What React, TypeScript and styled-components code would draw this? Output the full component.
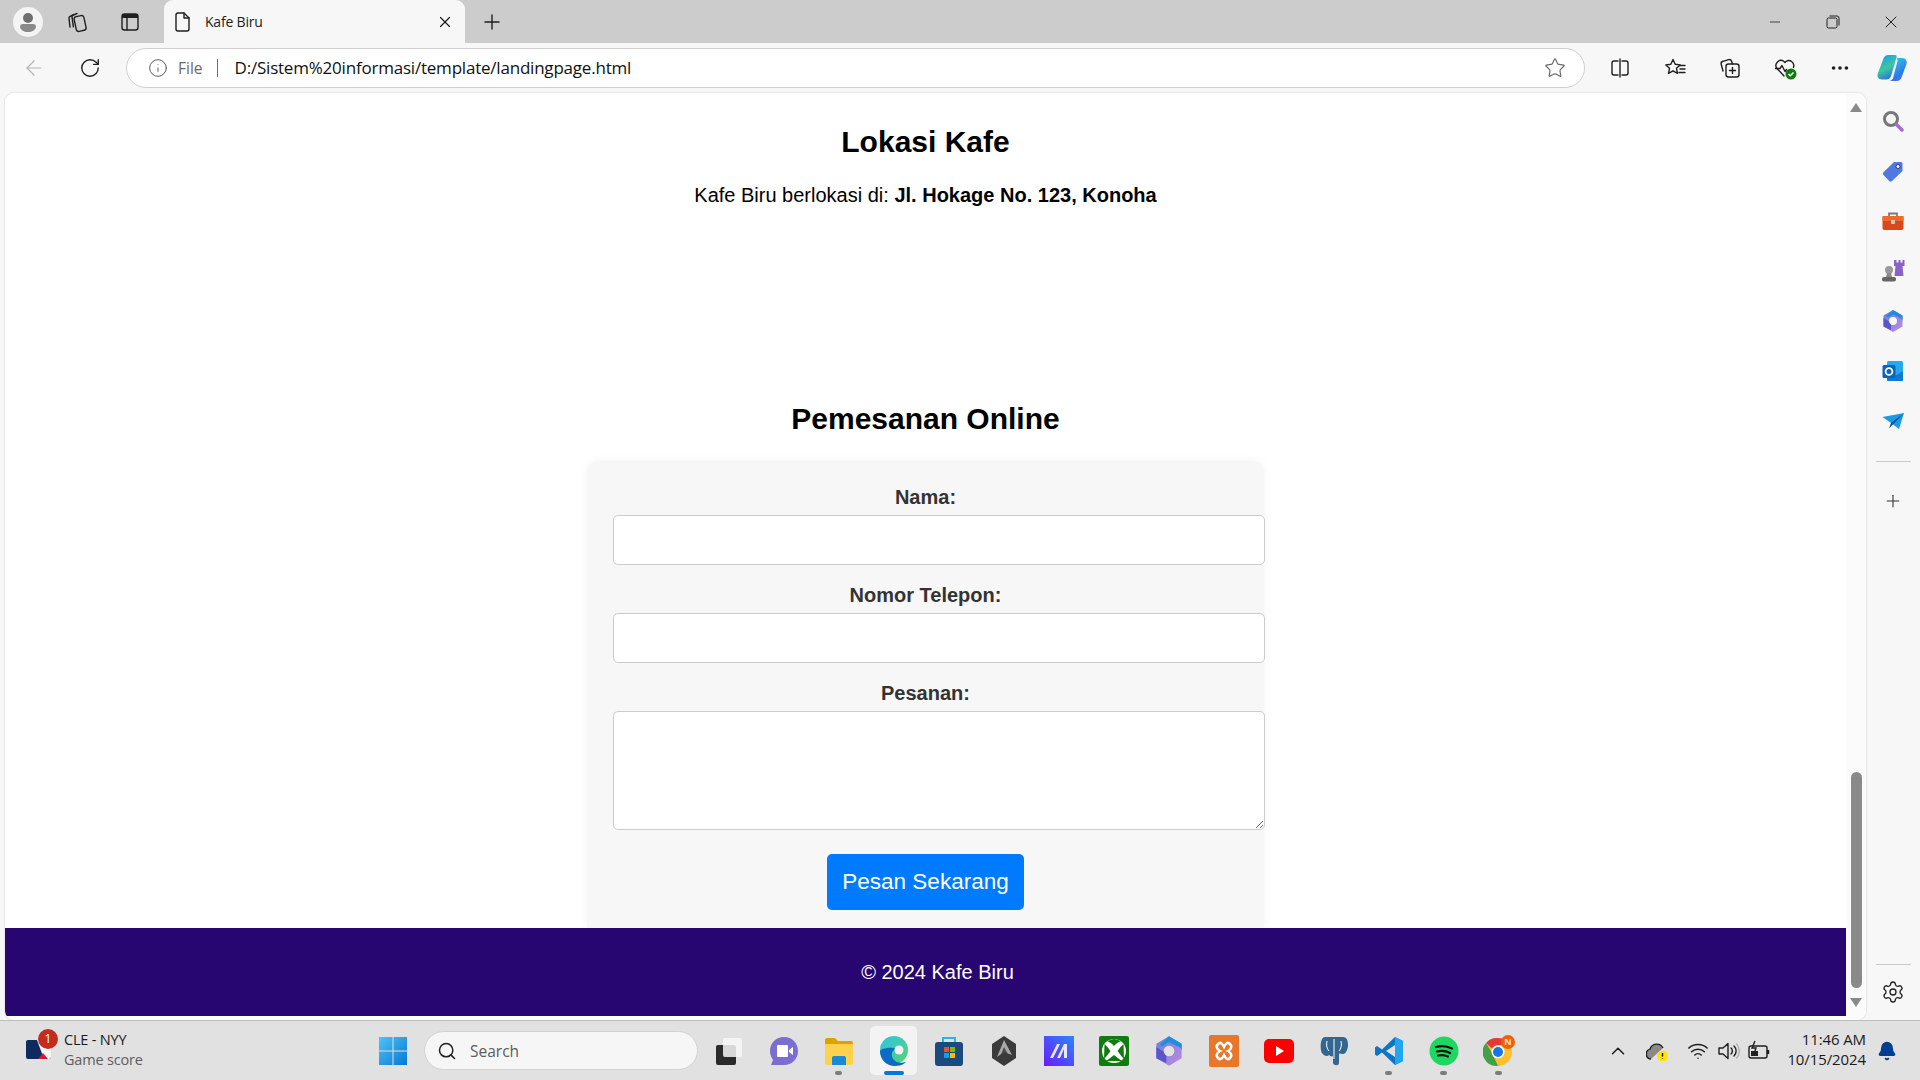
import React from "react"
import styled, { createGlobalStyle } from "styled-components"
import {
  ArrowLeft,
  Bell,
  ChevronUp,
  Info,
  Minus,
  MoreHorizontal,
  Plus,
  RotateCw,
  Search,
  Settings,
  Star,
  Wifi,
  X,
} from "lucide-react"

const GlobalStyle = createGlobalStyle`
  html, body {
    margin: 0;
    padding: 0;
    width: 1920px;
    height: 1080px;
    overflow: hidden;
    font-family: "Liberation Sans", Arial, sans-serif;
  }
  * { box-sizing: border-box; }
`

const Screen = styled.div`
  width: 1920px;
  height: 1080px;
  display: flex;
  flex-direction: column;
  overflow: hidden;
  background: #f7f7f7;
`

/* browser chrome */
const TabStrip = styled.div`
  height: 43px;
  flex: none;
  display: flex;
  align-items: center;
  background: #cccccc;
  color: #1f1f1f;
`
const Avatar = styled.div`
  width: 30px;
  height: 30px;
  margin-left: 13px;
  border-radius: 50%;
  background: #f4f4f4;
  display: flex;
  align-items: center;
  justify-content: center;
`
const StripSlot = styled.div<{ $w: number; $ml?: number }>`
  width: ${(p) => p.$w}px;
  height: 30px;
  margin-left: ${(p) => p.$ml ?? 0}px;
  flex: none;
  display: flex;
  align-items: center;
  justify-content: center;
`
const Tab = styled.div`
  width: 301px;
  height: 43px;
  margin-left: 8px;
  flex: none;
  display: flex;
  align-items: center;
  padding: 0 11px 0 6px;
  background: #f7f7f7;
  border-radius: 9px 9px 0 0;
  font-family: "Open Sans", sans-serif;
  font-size: 14px;
  color: #1c1c1c;
`
const TabTitle = styled.span`
  margin-left: 11px;
  flex: 1;
  letter-spacing: -0.2px;
`
const WindowControls = styled.div`
  margin-left: auto;
  display: flex;
  align-items: center;
`
const Toolbar = styled.div`
  height: 50px;
  flex: none;
  display: flex;
  align-items: center;
  background: #f7f7f7;
`
const ToolSlot = styled.div<{ $w: number; $ml?: number }>`
  width: ${(p) => p.$w}px;
  height: 36px;
  margin-left: ${(p) => p.$ml ?? 0}px;
  flex: none;
  display: flex;
  align-items: center;
  justify-content: center;
`
const AddressBar = styled.div`
  width: 1459px;
  height: 40px;
  margin-left: 8px;
  flex: none;
  display: flex;
  align-items: center;
  padding: 0 18px 0 21px;
  background: #ffffff;
  border: 1px solid #cfcfcf;
  border-radius: 20px;
`
const FileChip = styled.span`
  margin-left: 10px;
  padding-right: 14px;
  border-right: 1px solid #6f6f6f;
  line-height: 18px;
  font-family: "Open Sans", sans-serif;
  font-size: 15.5px;
  color: #6a6a6a;
`
const UrlText = styled.span`
  margin: 0 0 2px 17px;
  flex: 1;
  font-family: "Open Sans", sans-serif;
  font-size: 17px;
  letter-spacing: -0.21px;
  color: #111111;
`

/* page */
const Body = styled.div`
  flex: 1;
  display: flex;
  min-height: 0;
`
const Viewport = styled.div`
  width: 1861px;
  margin-left: 5px;
  flex: none;
  display: flex;
  background: #ffffff;
  border-radius: 9px;
  box-shadow: 0 0 2px rgba(0, 0, 0, 0.22);
  overflow: hidden;
`
const Page = styled.div`
  width: 1841px;
  flex: none;
  display: flex;
  flex-direction: column;
  padding-top: 28px;
  background: #ffffff;
`
const Heading = styled.h2`
  margin: 0;
  font-size: 30px;
  line-height: 42px;
  font-weight: 700;
  text-align: center;
  color: #000000;
`
const Address = styled.p`
  margin: 20px 0 191px;
  font-size: 20px;
  line-height: 24px;
  text-align: center;
  color: #000000;
`
const OrderForm = styled.form`
  width: 677px;
  height: 467px;
  flex: none;
  margin: 21px auto 0;
  padding: 24px 0 0 26px;
  background: #f7f7f7;
  border-radius: 12px 12px 0 0;
  box-shadow: 0 0 10px rgba(0, 0, 0, 0.05);
`
const FieldLabel = styled.label`
  display: block;
  width: 625px;
  margin-bottom: 6px;
  font-size: 20px;
  line-height: 24px;
  font-weight: 700;
  text-align: center;
  color: #333333;
`
const TextField = styled.input`
  display: block;
  width: 652px;
  height: 50px;
  margin-bottom: 18px;
  background: #ffffff;
  border: 1px solid #cccccc;
  border-radius: 5px;
`
const MessageField = styled.textarea`
  display: block;
  width: 652px;
  height: 119px;
  margin-bottom: 24px;
  background: #ffffff;
  border: 1px solid #cccccc;
  border-radius: 5px;
`
const SubmitRow = styled.div`
  width: 625px;
  display: flex;
  justify-content: center;
`
const SubmitButton = styled.button`
  width: 197px;
  height: 56px;
  padding: 0;
  border: none;
  border-radius: 5px;
  background: #007bff;
  color: #ffffff;
  font-family: "Liberation Sans", Arial, sans-serif;
  font-size: 22.5px;
`
const Footer = styled.footer`
  height: 88px;
  flex: none;
  display: flex;
  align-items: center;
  justify-content: center;
  padding-left: 24px;
  background: #280671;
  color: #ffffff;
  font-size: 20px;
`
const ScrollTrack = styled.div`
  width: 20px;
  flex: none;
  display: flex;
  flex-direction: column;
  align-items: center;
  padding: 10px 0 13px;
  background: #fbfbfb;
`
const ScrollArrow = styled.div<{ $down?: boolean }>`
  width: 0;
  height: 0;
  border-left: 6px solid transparent;
  border-right: 6px solid transparent;
  ${(p) =>
    p.$down
      ? "border-top: 9px solid #8a8a8a; margin-top: 10px;"
      : "border-bottom: 9px solid #8a8a8a;"}
`
const ScrollThumb = styled.div`
  width: 11px;
  height: 216px;
  margin-top: auto;
  border-radius: 6px;
  background: #8a8a8a;
`

/* edge sidebar */
const Sidebar = styled.aside`
  width: 54px;
  flex: none;
  display: flex;
  flex-direction: column;
  align-items: center;
  padding: 3px 0;
`
const SideSlot = styled.div`
  width: 50px;
  height: 50px;
  flex: none;
  display: flex;
  align-items: center;
  justify-content: center;
  color: #333333;
`
const SideRule = styled.div<{ $auto?: boolean }>`
  width: 35px;
  height: 1px;
  flex: none;
  margin: ${(p) => (p.$auto ? "auto 0 2px" : "15px 0 14px")};
  background: #c9c9c9;
`

/* windows taskbar */
const Taskbar = styled.div`
  height: 60px;
  flex: none;
  display: flex;
  align-items: center;
  position: relative;
  background: #e1e1e1;
  border-top: 1px solid #bdbdbd;
  font-family: "Open Sans", sans-serif;
  color: #1b1b1b;
`
const Widget = styled.div`
  width: 378px;
  flex: none;
  display: flex;
  align-items: center;
  padding-left: 26px;
`
const WidgetIcon = styled.div`
  position: relative;
  width: 26px;
  height: 26px;
`
const Badge = styled.span`
  position: absolute;
  top: -9px;
  left: 12px;
  width: 20px;
  height: 20px;
  border-radius: 50%;
  background: #c42b1c;
  color: #ffffff;
  font-size: 12px;
  line-height: 20px;
  text-align: center;
`
const WidgetText = styled.div`
  margin-left: 12px;
  margin-top: -2px;
  font-size: 14.5px;
  line-height: 20px;
  letter-spacing: -0.2px;
`
const WidgetSub = styled.div`
  color: #5e5e5e;
`
const SearchPill = styled.div`
  width: 274px;
  height: 39px;
  flex: none;
  margin: 0 3px 0 16px;
  display: flex;
  align-items: center;
  padding-left: 12px;
  gap: 13px;
  background: #f6f6f6;
  border: 1px solid #d2d2d2;
  border-radius: 20px;
  color: #5c5c5c;
  font-size: 15.5px;
`
const TaskSlot = styled.div<{ $active?: boolean }>`
  width: 47px;
  height: 49px;
  margin: 0 4px;
  flex: none;
  position: relative;
  display: flex;
  align-items: center;
  justify-content: center;
  border-radius: 5px;
  background: ${(p) => (p.$active ? "#f3f3f3" : "transparent")};
`
const RunDot = styled.span<{ $active?: boolean }>`
  position: absolute;
  bottom: 0;
  left: 50%;
  width: ${(p) => (p.$active ? 20 : 7)}px;
  height: 4px;
  margin-left: ${(p) => (p.$active ? -10 : -3.5)}px;
  border-radius: 2px;
  background: ${(p) => (p.$active ? "#0078d4" : "#7c7c7c")};
`
const Tray = styled.div`
  margin-left: auto;
  padding-right: 13px;
  display: flex;
  align-items: center;
`
const TraySlot = styled.div<{ $w: number }>`
  width: ${(p) => p.$w}px;
  flex: none;
  display: flex;
  align-items: center;
  justify-content: center;
`
const Clock = styled.div`
  width: 90px;
  margin-bottom: 4px;
  text-align: right;
  font-size: 15px;
  line-height: 20px;
  letter-spacing: -0.1px;
`

type IconProps = { size?: number }
const Svg: React.FC<React.PropsWithChildren<IconProps>> = ({ size = 24, children }) => (
  <svg width={size} height={size} viewBox="0 0 24 24" fill="none">
    {children}
  </svg>
)
const line = { stroke: "#1f1f1f", strokeWidth: 1.4, strokeLinecap: "round", strokeLinejoin: "round" } as const

const ProfileIcon = () => (
  <svg width="20" height="22" viewBox="0 0 20 22">
    <circle cx="10" cy="7" r="5" fill="#6f6f6f" />
    <path d="M2 15a3 3 0 0 1 3-2h10a3 3 0 0 1 3 2c0 4-4 6-8 6s-8-2-8-6z" fill="#8a8a8a" />
  </svg>
)
const WorkspacesIcon = () => (
  <Svg>
    <path d="M9 4.500 5 6.500a1.500 1.500 0 0 0-1 1.600l1 9" {...line} />
    <path d="M12 3.500 7.800 5.300A1.500 1.500 0 0 0 7 6.900l1.400 10" {...line} />
    <rect x="10" y="6" width="10" height="15" rx="2.500" transform="rotate(-12 15 13)" {...line} />
  </Svg>
)
const TabActionsIcon = () => (
  <Svg>
    <rect x="4" y="4" width="16" height="16" rx="2.500" {...line} />
    <path d="M4 6.500A2.500 2.500 0 0 1 6.500 4h11A2.500 2.500 0 0 1 20 6.500V8H4z" fill="#1f1f1f" />
    <path d="M9 8v12" {...line} />
  </Svg>
)
const DocIcon = () => (
  <Svg>
    <path d="M6 5a2 2 0 0 1 2-2h6l5 5v11a2 2 0 0 1-2 2H8a2 2 0 0 1-2-2z" {...line} />
    <path d="M14 3v5h5" {...line} />
  </Svg>
)
const RestoreIcon = () => (
  <svg width="14" height="14" viewBox="0 0 14 14" fill="none">
    <rect x="1" y="3" width="10" height="10" rx="1.500" stroke="#1f1f1f" />
    <path d="M3.500 1H11a2 2 0 0 1 2 2v7.500" stroke="#1f1f1f" />
  </svg>
)
const SplitIcon = () => (
  <Svg>
    <path d="M10 5H6a2 2 0 0 0-2 2v10a2 2 0 0 0 2 2h4M14 5h4a2 2 0 0 1 2 2v10a2 2 0 0 1-2 2h-4M12 3v18" {...line} />
  </Svg>
)
const FavoritesIcon = () => (
  <Svg>
    <path d="M10 3.500l2.200 4.800 5 .6-3.700 3.400 1 5.100-4.500-2.600-4.500 2.600 1-5.100L2.800 8.900l5-.6z" {...line} />
    <path d="M17 9.500h5M17 13h5M16 16.500h6" {...line} />
  </Svg>
)
const CollectionsIcon = () => (
  <Svg>
    <rect x="8" y="8" width="13" height="13" rx="2.500" {...line} />
    <path d="M14.500 11.500v6M11.500 14.500h6" {...line} />
    <path d="M5 15 3.200 8.300a2.500 2.500 0 0 1 1.800-3l5.600-1.600a2.500 2.500 0 0 1 3 1.600L14.500 8" {...line} />
  </Svg>
)
const HealthIcon = () => (
  <Svg>
    <path d="M11 20 4 12.500a5 5 0 0 1 7-7l1 1 1-1a5 5 0 0 1 7.400 6" {...line} />
    <path d="M2.500 12.500H7l2-3 3 6 1.500-2" {...line} />
    <circle cx="18" cy="18" r="5.500" fill="#107c10" />
    <path d="M15.500 18l1.800 1.800 3.200-3.300" stroke="#fff" strokeWidth="1.500" />
  </Svg>
)
const CopilotIcon = () => (
  <svg width="32" height="32" viewBox="0 0 32 32">
    <defs>
      <linearGradient id="cop1" x1="0.2" y1="0" x2="0.6" y2="1">
        <stop offset="0" stopColor="#1b9de8" />
        <stop offset="0.55" stopColor="#3cc8a0" />
        <stop offset="1" stopColor="#2c6fe0" />
      </linearGradient>
      <linearGradient id="cop2" x1="0.2" y1="0" x2="0.8" y2="1">
        <stop offset="0" stopColor="#3ac7f0" />
        <stop offset="0.7" stopColor="#2a7ce8" />
        <stop offset="1" stopColor="#7c5ce0" />
      </linearGradient>
    </defs>
    <path d="M12 3h7c1.500 0 2 1 1.500 2.500L15 24c-.8 2.400-2.500 3.500-4.500 3.500H6C2.500 27.500.8 24.500 1.800 21.500L7.500 6.500C8.300 4.300 10 3 12 3z" fill="url(#cop1)" />
    <path d="M20 6h6c3.500 0 5.500 3 4.500 6l-5 13.500c-.8 2.200-2.500 3.500-4.500 3.500h-8c2 0 3.500-1.500 4.200-3.500L21.500 9c.3-1-.3-3-1.500-3z" fill="url(#cop2)" />
  </svg>
)

const MagnifierIcon = () => (
  <Svg>
    <circle cx="10" cy="10" r="6.500" stroke="#767676" strokeWidth="3" />
    <path d="M15.500 15.500 21 21" stroke="#a66bd3" strokeWidth="3.500" strokeLinecap="round" />
  </Svg>
)
const TagIcon = () => (
  <Svg>
    <path d="M13 3h7a1.500 1.500 0 0 1 1.500 1.500V12L11 22a2 2 0 0 1-2.800 0L2.500 16a2 2 0 0 1 0-2.800z" fill="#4f79e0" />
    <circle cx="17" cy="7.500" r="2" fill="#fff" stroke="#1e3a8a" />
  </Svg>
)
const ToolboxIcon = () => (
  <Svg>
    <path d="M8 7V4.500h8V7" stroke="#7a7a7a" strokeWidth="1.800" />
    <rect x="1.500" y="7" width="21" height="14" rx="2" fill="#d8481a" />
    <rect x="1.500" y="7" width="21" height="5" fill="#ef6a2a" />
    <rect x="10" y="11" width="4" height="4" fill="#c9c9c9" />
  </Svg>
)
const ChessIcon = () => (
  <Svg>
    <circle cx="8" cy="11" r="4" fill="#9a9a9a" />
    <path d="M6 14h4l1 4H5z" fill="#8a8a8a" />
    <rect x="1" y="18" width="14" height="4.500" rx="2" fill="#666" />
    <path d="M13 1h2.500v2.500h2V1h2v2.500h2V1H23.500v6h-2l1 10h-9l1-10h-1.500z" fill="#8b63c6" />
  </Svg>
)
const M365Icon = ({ size = 24 }: IconProps) => (
  <Svg size={size}>
    <defs>
      <linearGradient id={`m365-${size}`} x1="0" y1="0" x2="1" y2="1">
        <stop offset="0" stopColor="#6a7fe0" />
        <stop offset="1" stopColor="#c08be0" />
      </linearGradient>
    </defs>
    <path
      d="M12 1 21.500 6.500v11L12 23 2.500 17.500v-11zM12 8a4 4 0 1 0 0 8 4 4 0 0 0 0-8z"
      fillRule="evenodd"
      fill={`url(#m365-${size})`}
    />
    <path d="M12 1 21.500 6.500v6.500a4 4 0 0 0-2-4L12 5.500 7 8.500 5 7.300z" fill="#1f8fdc" />
    <path d="M2.500 9 8 12.500a4 4 0 0 0 2 3V21l-7.500-3.500z" fill="#5a55c8" />
  </Svg>
)
const OutlookIcon = () => (
  <Svg>
    <rect x="6" y="2" width="16" height="20" rx="1.500" fill="#28a8ea" />
    <path d="M6 12l8 5 8-5v9a1 1 0 0 1-1 1H7a1 1 0 0 1-1-1z" fill="#0f78d4" />
    <rect x="1.500" y="6" width="13" height="13" rx="1.500" fill="#0a64b8" />
    <circle cx="8" cy="12.500" r="3.400" fill="none" stroke="#fff" strokeWidth="1.800" />
  </Svg>
)
const SendIcon = () => (
  <Svg>
    <path d="M1.500 8 23 4 18 20 10 14z" fill="#1a9be6" />
    <path d="M10 14 23 4 8 19.500z" fill="#0b4f9e" />
  </Svg>
)

const MlbIcon = () => (
  <svg width="26" height="22" viewBox="0 0 26 22">
    <rect x="0" y="2" width="25" height="19" rx="2" fill="#0d2b5e" />
    <path d="M11 2h12a2 2 0 0 1 2 2v15a2 2 0 0 1-2 2h-5z" fill="#f4f4f4" />
    <path d="M22 21h-10l5-6z" fill="#d5173d" />
  </svg>
)
const StartIcon = () => (
  <svg width="30" height="30" viewBox="0 0 30 30">
    <defs>
      <linearGradient id="win" x1="0" y1="0" x2="1" y2="1">
        <stop offset="0" stopColor="#4fc3f7" />
        <stop offset="1" stopColor="#0678d4" />
      </linearGradient>
    </defs>
    <path d="M1 1h13.500v13.500H1zM15.500 1H29v13.500H15.500zM1 15.500h13.500V29H1zM15.500 15.500H29V29H15.500z" fill="url(#win)" />
  </svg>
)
const DesktopsIcon = () => (
  <svg width="30" height="30" viewBox="0 0 30 30">
    <rect x="2" y="9" width="20" height="20" rx="2" fill="#2a2a2a" />
    <rect x="9" y="2" width="19" height="19" rx="2" fill="#f7f7f7" fillOpacity=".85" />
  </svg>
)
const MeetIcon = () => (
  <svg width="30" height="30" viewBox="0 0 30 30">
    <path d="M15 1c8 0 14 6 14 14s-6 14-14 14H2l2-5C2 21 1 18 1 15 1 7 7 1 15 1z" fill="#7a6fd0" />
    <path d="M8 10a1 1 0 0 1 1-1h9a1 1 0 0 1 1 1v10a1 1 0 0 1-1 1H9a1 1 0 0 1-1-1zM20 14l4-3v8l-4-3z" fill="#fff" />
  </svg>
)
const ExplorerIcon = () => (
  <svg width="30" height="30" viewBox="0 0 30 30">
    <path d="M1 4a2 2 0 0 1 2-2h8l3 3h13a2 2 0 0 1 2 2v4H1z" fill="#e0a100" />
    <path d="M1 8h28v19a2 2 0 0 1-2 2H3a2 2 0 0 1-2-2z" fill="#ffd24d" />
    <path d="M10 20h10a2 2 0 0 1 2 2v7H8v-7a2 2 0 0 1 2-2z" fill="#1a8ad4" />
  </svg>
)
const EdgeIcon = () => (
  <svg width="32" height="32" viewBox="0 0 32 32">
    <defs>
      <linearGradient id="edge" x1="0" y1="0" x2="1" y2="1">
        <stop offset="0" stopColor="#2fc4e8" />
        <stop offset="1" stopColor="#54d46e" />
      </linearGradient>
    </defs>
    <circle cx="16" cy="15" r="14" fill="url(#edge)" />
    <path d="M2 16c0 9 7 15 15 15 4 0 8-1 11-4-6 2-13 0-14-6-1-4 2-7 5-7-6-3-17 0-17 2z" fill="#0c6cc4" />
    <circle cx="21" cy="15" r="4.500" fill="#f3f3f3" />
  </svg>
)
const StoreIcon = () => (
  <svg width="30" height="32" viewBox="0 0 30 32">
    <path d="M9 8V3h12v5" fill="none" stroke="#26b6e8" strokeWidth="2" />
    <rect x="1" y="7" width="28" height="24" rx="3" fill="#1b4b7d" />
    <rect x="10" y="12" width="5" height="5" fill="#f25022" />
    <rect x="16" y="12" width="5" height="5" fill="#7fba00" />
    <rect x="10" y="18" width="5" height="5" fill="#00a4ef" />
    <rect x="16" y="18" width="5" height="5" fill="#ffb900" />
  </svg>
)
const ShardIcon = () => (
  <svg width="28" height="32" viewBox="0 0 28 32">
    <path d="M14 1 26 9v14l-12 8-12-8V9z" fill="#3a3a3a" />
    <path d="M14 5 22 20l-8-3-7 5z" fill="#a8a8a8" />
    <path d="M14 12 18 19l-4-1.500-3 2z" fill="#4a4a4a" />
  </svg>
)
const MaIcon = () => (
  <svg width="30" height="30" viewBox="0 0 30 30">
    <defs>
      <linearGradient id="ma" x1="0" y1="1" x2="1" y2="0">
        <stop offset="0" stopColor="#6a1bff" />
        <stop offset="1" stopColor="#2a86ff" />
      </linearGradient>
    </defs>
    <rect width="30" height="30" fill="url(#ma)" />
    <path d="M6 22 13 8h3L9 22zM13 22 20 8h3v14h-3V13l-4 9z" fill="#e8e8ff" />
  </svg>
)
const XboxIcon = () => (
  <svg width="30" height="30" viewBox="0 0 30 30">
    <rect width="30" height="30" rx="2" fill="#107c10" />
    <circle cx="15" cy="15" r="12" fill="#fff" />
    <path d="M15 10Q11 5.500 8 5.500 15 .5 22 5.500 19 5.500 15 10z" fill="#107c10" />
    <path d="M15 19Q20 23 23 25H7Q10 23 15 19z" fill="#107c10" />
    <path d="M5.500 8Q9 11 11.500 15 8 20 5 23z" fill="#107c10" />
    <path d="M24.500 8Q21 11 18.500 15 22 20 25 23z" fill="#107c10" />
  </svg>
)
const XamppIcon = () => (
  <svg width="30" height="32" viewBox="0 0 30 32">
    <rect width="30" height="32" rx="2" fill="#e9772a" />
    <path d="M9 9c3-3 5 1 6 3 1-2 3-6 6-3s0 6-2 7c2 1 5 4 2 7s-5-1-6-3c-1 2-3 6-6 3s0-6 2-7C9 15 6 12 9 9z" fill="none" stroke="#fff" strokeWidth="2.500" />
  </svg>
)
const YoutubeIcon = () => (
  <svg width="30" height="30" viewBox="0 0 30 30">
    <rect y="3" width="30" height="24" rx="5" fill="#f00" />
    <path d="M12 10l8 5-8 5z" fill="#fff" />
  </svg>
)
const PostgresIcon = () => (
  <svg width="30" height="32" viewBox="0 0 30 32">
    <path d="M6 2h18c4 0 5 4 5 8s-2 9-5 9c-2 0-3-1-4 0v9c0 3-5 3-6 0v-7c-1 1-3 0-4-1-2 2-5 1-7-2C1 14 1 2 6 2z" fill="#336791" />
    <path d="M15 4v20M8 6c-1 4 0 8 2 10M22 6c1 4 0 8-2 10" stroke="#fff" strokeWidth="1" fill="none" />
  </svg>
)
const VscodeIcon = () => (
  <svg width="30" height="30" viewBox="0 0 30 30">
    <path d="M21 1 29 5v20l-8 4-13-12.500L3 20l-2-1.500V11.500L3 10l5 3.500z" fill="#0e75c5" />
    <path d="M21 1 29 5v20l-8 4z" fill="#1fa8f1" />
    <path d="M21 9 12 15l9 6z" fill="#e1e1e1" />
  </svg>
)
const SpotifyIcon = () => (
  <svg width="30" height="30" viewBox="0 0 30 30">
    <circle cx="15" cy="15" r="14.500" fill="#1ed760" />
    <path d="M7 11c5-1.500 11-1 16 1.500M8 15.500c4-1 9-.8 13 1.500M9 19.500c3.500-.8 7-.5 10 1" stroke="#111" strokeWidth="2.200" strokeLinecap="round" fill="none" />
  </svg>
)
const ChromeIcon = () => (
  <svg width="32" height="32" viewBox="0 0 32 32">
    <circle cx="15" cy="17" r="14" fill="#fbc02d" />
    <path d="M15 3a14 14 0 0 1 12 7H15a7 7 0 0 0-6 3.500L3 8a14 14 0 0 1 12-5z" fill="#e53935" />
    <path d="M3 8l6 10 6 13A14 14 0 0 1 3 8z" fill="#43a047" />
    <circle cx="15" cy="17" r="6.500" fill="#fff" />
    <circle cx="15" cy="17" r="5" fill="#1a73e8" />
    <circle cx="25" cy="7" r="7" fill="#e8630a" />
    <text x="25" y="10" fontSize="9" fontWeight="700" textAnchor="middle" fill="#ffe0c0" fontFamily="Open Sans, sans-serif">N</text>
  </svg>
)
const CloudWarnIcon = () => (
  <Svg>
    <path d="M5 20a5 5 0 0 1-1-9.800A7 7 0 0 1 17 9" stroke="#222" strokeWidth="1.400" fill="#8a8a8a" />
    <circle cx="16.500" cy="17" r="5.500" fill="#ffe500" />
    <path d="M16.500 14v3.500M16.500 19v.6" stroke="#111" strokeWidth="1.400" />
  </Svg>
)
const VolumeIcon = () => (
  <Svg>
    <path d="M3 9v6h4l5 4.500v-15L7 9z" {...line} />
    <path d="M15 9a4 4 0 0 1 0 6M18 7a7 7 0 0 1 0 10" {...line} />
    <path d="M20.500 5a10 10 0 0 1 0 14" stroke="#b5b5b5" strokeWidth="1.400" strokeLinecap="round" />
  </Svg>
)
const BatteryIcon = () => (
  <Svg>
    <rect x="2" y="7" width="18" height="12" rx="2" {...line} />
    <rect x="4" y="12" width="7" height="5" fill="#1f1f1f" />
    <path d="M21 11v4" stroke="#1f1f1f" strokeWidth="2.500" />
    <path d="M8 2 5 9h4l-2 6" stroke="#1f1f1f" strokeWidth="1.400" fill="none" />
  </Svg>
)

const sideIcons = [MagnifierIcon, TagIcon, ToolboxIcon, ChessIcon, () => <M365Icon />, OutlookIcon, SendIcon]

const taskIcons: { icon: React.FC; running?: boolean; active?: boolean }[] = [
  { icon: MeetIcon },
  { icon: ExplorerIcon, running: true },
  { icon: EdgeIcon, running: true, active: true },
  { icon: StoreIcon },
  { icon: ShardIcon },
  { icon: MaIcon },
  { icon: XboxIcon },
  { icon: () => <M365Icon size={32} /> },
  { icon: XamppIcon },
  { icon: YoutubeIcon },
  { icon: PostgresIcon },
  { icon: VscodeIcon, running: true },
  { icon: SpotifyIcon, running: true },
  { icon: ChromeIcon, running: true },
]

export default function App() {
  return (
    <Screen>
      <GlobalStyle />
      <TabStrip>
        <Avatar>
          <ProfileIcon />
        </Avatar>
        <StripSlot $w={53} $ml={7}>
          <WorkspacesIcon />
        </StripSlot>
        <StripSlot $w={53}>
          <TabActionsIcon />
        </StripSlot>
        <Tab>
          <DocIcon />
          <TabTitle>Kafe Biru</TabTitle>
          <X size={18} strokeWidth={1.6} color="#1f1f1f" />
        </Tab>
        <StripSlot $w={54}>
          <Plus size={24} strokeWidth={1.4} />
        </StripSlot>
        <WindowControls>
          <StripSlot $w={58}>
            <Minus size={16} strokeWidth={1.2} />
          </StripSlot>
          <StripSlot $w={58}>
            <RestoreIcon />
          </StripSlot>
          <StripSlot $w={58}>
            <X size={20} strokeWidth={1.2} />
          </StripSlot>
        </WindowControls>
      </TabStrip>

      <Toolbar>
        <ToolSlot $w={56} $ml={6}>
          <ArrowLeft size={24} strokeWidth={1.2} color="#b5b5b5" />
        </ToolSlot>
        <ToolSlot $w={56}>
          <RotateCw size={22} strokeWidth={1.5} color="#1f1f1f" />
        </ToolSlot>
        <AddressBar>
          <Info size={20} strokeWidth={1.2} color="#5f5f5f" />
          <FileChip>File</FileChip>
          <UrlText>D:/Sistem%20informasi/template/landingpage.html</UrlText>
          <Star size={22} strokeWidth={1.3} color="#6a6a6a" />
        </AddressBar>
        <ToolSlot $w={55} $ml={7}>
          <SplitIcon />
        </ToolSlot>
        <ToolSlot $w={55}>
          <FavoritesIcon />
        </ToolSlot>
        <ToolSlot $w={55}>
          <CollectionsIcon />
        </ToolSlot>
        <ToolSlot $w={55}>
          <HealthIcon />
        </ToolSlot>
        <ToolSlot $w={55}>
          <MoreHorizontal size={22} strokeWidth={2} color="#1f1f1f" />
        </ToolSlot>
        <ToolSlot $w={50}>
          <CopilotIcon />
        </ToolSlot>
      </Toolbar>

      <Body>
        <Viewport>
          <Page>
            <Heading>Lokasi Kafe</Heading>
            <Address>
              Kafe Biru berlokasi di: <strong>Jl. Hokage No. 123, Konoha</strong>
            </Address>
            <Heading>Pemesanan Online</Heading>
            <OrderForm>
              <FieldLabel>Nama:</FieldLabel>
              <TextField type="text" />
              <FieldLabel>Nomor Telepon:</FieldLabel>
              <TextField type="tel" />
              <FieldLabel>Pesanan:</FieldLabel>
              <MessageField />
              <SubmitRow>
                <SubmitButton type="button">Pesan Sekarang</SubmitButton>
              </SubmitRow>
            </OrderForm>
            <Footer>© 2024 Kafe Biru</Footer>
          </Page>
          <ScrollTrack>
            <ScrollArrow />
            <ScrollThumb />
            <ScrollArrow $down />
          </ScrollTrack>
        </Viewport>
        <Sidebar>
          {sideIcons.map((Icon, i) => (
            <SideSlot key={i}>
              <Icon />
            </SideSlot>
          ))}
          <SideRule />
          <SideSlot>
            <Plus size={20} strokeWidth={1.3} />
          </SideSlot>
          <SideRule $auto />
          <SideSlot>
            <Settings size={24} strokeWidth={1.3} color="#1f1f1f" />
          </SideSlot>
        </Sidebar>
      </Body>

      <Taskbar>
        <Widget>
          <WidgetIcon>
            <MlbIcon />
            <Badge>1</Badge>
          </WidgetIcon>
          <WidgetText>
            <div>CLE - NYY</div>
            <WidgetSub>Game score</WidgetSub>
          </WidgetText>
        </Widget>
        <StartIcon />
        <SearchPill>
          <Search size={20} strokeWidth={1.8} color="#1f1f1f" />
          Search
        </SearchPill>
        <TaskSlot>
          <DesktopsIcon />
        </TaskSlot>
        {taskIcons.map(({ icon: Icon, running, active }, i) => (
          <TaskSlot key={i} $active={active}>
            <Icon />
            {running && <RunDot $active={active} />}
          </TaskSlot>
        ))}
        <Tray>
          <TraySlot $w={32}>
            <ChevronUp size={22} strokeWidth={1.6} />
          </TraySlot>
          <TraySlot $w={48}>
            <CloudWarnIcon />
          </TraySlot>
          <TraySlot $w={32}>
            <Wifi size={22} strokeWidth={1.6} />
          </TraySlot>
          <TraySlot $w={28}>
            <VolumeIcon />
          </TraySlot>
          <TraySlot $w={34}>
            <BatteryIcon />
          </TraySlot>
          <Clock>
            11:46 AM
            <br />
            10/15/2024
          </Clock>
          <TraySlot $w={41}>
            <Bell size={20} fill="#003e92" color="#003e92" />
          </TraySlot>
        </Tray>
      </Taskbar>
    </Screen>
  )
}
